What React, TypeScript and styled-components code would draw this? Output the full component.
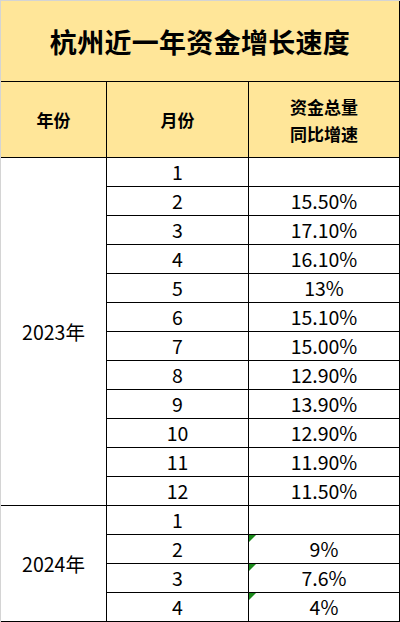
import React from 'react';
import styled, { createGlobalStyle } from 'styled-components';

const GlobalStyle = createGlobalStyle`
  html, body {
    margin: 0;
    padding: 0;
    background: #ffffff;
  }
  body {
    font-family: "Noto Sans CJK SC", "Noto Sans", sans-serif;
    color: #000;
  }
`;

const Sheet = styled.div`
  width: 400px;
  box-sizing: border-box;
  display: grid;
  grid-template-columns: 105px 141px 150px;
  grid-template-rows: 80px 75px repeat(16, 28px);
  gap: 1px;
  background: #000;
  border-top: 1px solid #d4d4d4;
  border-left: 1px solid #d4d4d4;
  padding: 0 1px 1px 0;
`;

const Cell = styled.div<{ $bg?: string }>`
  background: ${({ $bg }) => $bg || '#ffffff'};
  display: flex;
  align-items: center;
  justify-content: center;
  text-align: center;
  position: relative;
`;

const Title = styled(Cell)`
  grid-column: 1 / span 3;
  font-size: 27px;
  font-weight: 700;
  letter-spacing: 0.3px;
`;

const Head = styled(Cell)`
  font-size: 17px;
  font-weight: 700;
  line-height: 27px;
`;

const YearCell = styled(Cell)<{ $span: number }>`
  grid-row: span ${({ $span }) => $span};
  font-size: 19.5px;
`;

const Num = styled(Cell)<{ $flag?: boolean }>`
  font-size: 19.5px;
  line-height: 28px;

  &::before {
    content: '';
    display: ${({ $flag }) => ($flag ? 'block' : 'none')};
    position: absolute;
    left: 0;
    top: 0;
    width: 0;
    height: 0;
    border-top: 7px solid #1b8a1b;
    border-right: 7px solid transparent;
  }
`;

const GOLD = '#FFE699';

type Year = { year: string; rows: { m: string; v: string; flag?: boolean }[] };

const data: Year[] = [
  {
    year: '2023年',
    rows: [
      { m: '1', v: '' },
      { m: '2', v: '15.50%' },
      { m: '3', v: '17.10%' },
      { m: '4', v: '16.10%' },
      { m: '5', v: '13%' },
      { m: '6', v: '15.10%' },
      { m: '7', v: '15.00%' },
      { m: '8', v: '12.90%' },
      { m: '9', v: '13.90%' },
      { m: '10', v: '12.90%' },
      { m: '11', v: '11.90%' },
      { m: '12', v: '11.50%' },
    ],
  },
  {
    year: '2024年',
    rows: [
      { m: '1', v: '' },
      { m: '2', v: '9%', flag: true },
      { m: '3', v: '7.6%', flag: true },
      { m: '4', v: '4%', flag: true },
    ],
  },
];

export default function App() {
  return (
    <>
      <GlobalStyle />
      <Sheet>
        <Title $bg={GOLD}>杭州近一年资金增长速度</Title>
        <Head $bg={GOLD}>年份</Head>
        <Head $bg={GOLD}>月份</Head>
        <Head $bg={GOLD}>
          资金总量
          <br />
          同比增速
        </Head>
        {data.map((y) =>
          y.rows.map((r, i) => (
            <React.Fragment key={y.year + r.m}>
              {i === 0 && <YearCell $span={y.rows.length}>{y.year}</YearCell>}
              <Num>{r.m}</Num>
              <Num $flag={r.flag}>{r.v}</Num>
            </React.Fragment>
          ))
        )}
      </Sheet>
    </>
  );
}
